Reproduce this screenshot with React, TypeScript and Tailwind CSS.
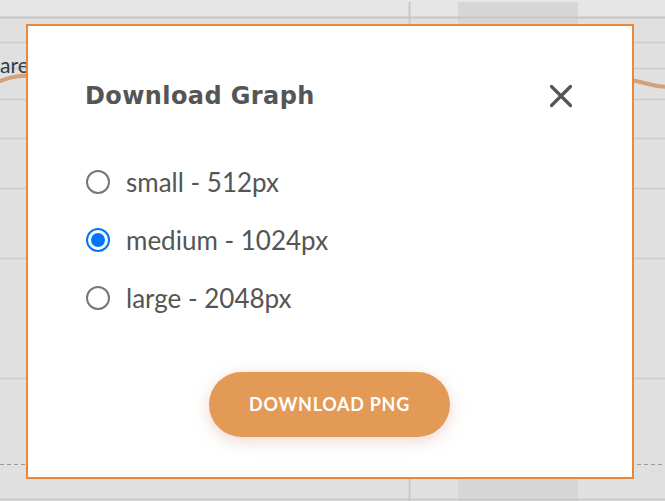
import { useState } from "react";

const sizes = [
  { id: "small", label: "small - 512px" },
  { id: "medium", label: "medium - 1024px" },
  { id: "large", label: "large - 2048px" },
];

const ChartBackdrop = () => {
  const rows = [42, 68, 99, 138, 188, 258, 378];
  return (
    <svg className="absolute inset-0" width="665" height="501" viewBox="0 0 665 501">
      <rect x="0" y="0" width="665" height="17" fill="#e6e6e6" />
      <rect x="458" y="2" width="120" height="499" fill="#d6d6d6" />
      <line x1="409.5" y1="2" x2="409.5" y2="501" stroke="#c8c8c8" strokeWidth="2" />
      <line x1="0" y1="17.5" x2="665" y2="17.5" stroke="#c6c6c6" strokeWidth="2" />
      {rows.map((y) => (
        <line key={y} x1="0" y1={y + 0.5} x2="665" y2={y + 0.5} stroke="#cbcbcb" strokeWidth="1.5" />
      ))}
      <line x1="0" y1="464.5" x2="665" y2="464.5" stroke="#9a9a9a" strokeWidth="1" strokeDasharray="4 3" />
      <line x1="0" y1="499.5" x2="665" y2="499.5" stroke="#c6c6c6" strokeWidth="1.5" />
      <path d="M-5 83 C 5 79, 15 75, 30 76" fill="none" stroke="#d4a27a" strokeWidth="4" />
      <path d="M630 80 C 645 82, 652 87, 670 87" fill="none" stroke="#d4a27a" strokeWidth="4" />
      <text x="0" y="73" fontSize="21" fill="#2c3e50" fontFamily="Lato, sans-serif">
        are
      </text>
    </svg>
  );
};

const Radio = ({ checked }: { checked: boolean }) => (
  <span
    className={
      checked
        ? "flex items-center justify-center w-[24px] h-[24px] rounded-full border-2 border-[#0075ff] bg-white"
        : "flex items-center justify-center w-[24px] h-[24px] rounded-full border-2 border-[#767676] bg-white"
    }
  >
    {checked && <span className="w-[14px] h-[14px] rounded-full bg-[#0075ff]" />}
  </span>
);

export default function App() {
  const [size, setSize] = useState("medium");

  return (
    <div
      className="relative w-[665px] h-[501px] bg-[#e0e0e0] overflow-hidden"
      style={{ fontFamily: "Lato, 'Noto Sans', sans-serif" }}
    >
      <ChartBackdrop />

      <div className="absolute left-[26px] top-[24px] w-[608px] h-[455px] bg-white border-2 border-[#e8883a] flex flex-col pl-[57px] pr-[59px] pt-[53px]">
        <div className="flex items-center justify-between">
          <h2
            className="text-[24px] leading-[34px] font-bold text-[#555555] tracking-[0.4px]"
            style={{ fontFamily: "'DejaVu Sans', sans-serif" }}
          >
            Download Graph
          </h2>
          <button className="w-[24px] h-[24px] flex items-center justify-center">
            <svg width="24" height="24" viewBox="0 0 24 24">
              <path d="M2.5 2.5 L21.5 21.5 M21.5 2.5 L2.5 21.5" stroke="#555555" strokeWidth="3.2" strokeLinecap="round" />
            </svg>
          </button>
        </div>

        <div className="flex flex-col gap-[34px] mt-[57px] pl-[1px]">
          {sizes.map((s) => (
            <label
              key={s.id}
              className="flex items-center gap-[16px] h-[24px] cursor-pointer"
              onClick={() => setSize(s.id)}
            >
              <Radio checked={size === s.id} />
              <span className="text-[26px] text-[#555555] leading-none">{s.label}</span>
            </label>
          ))}
        </div>

        <div className="flex justify-center mt-[62px] pl-[1px]">
          <button className="w-[241px] h-[65px] rounded-full bg-[#e39a57] text-white font-bold text-[18px] tracking-[0.7px] shadow-[0_4px_16px_rgba(200,140,120,0.35)]">
            DOWNLOAD PNG
          </button>
        </div>
      </div>
    </div>
  );
}
